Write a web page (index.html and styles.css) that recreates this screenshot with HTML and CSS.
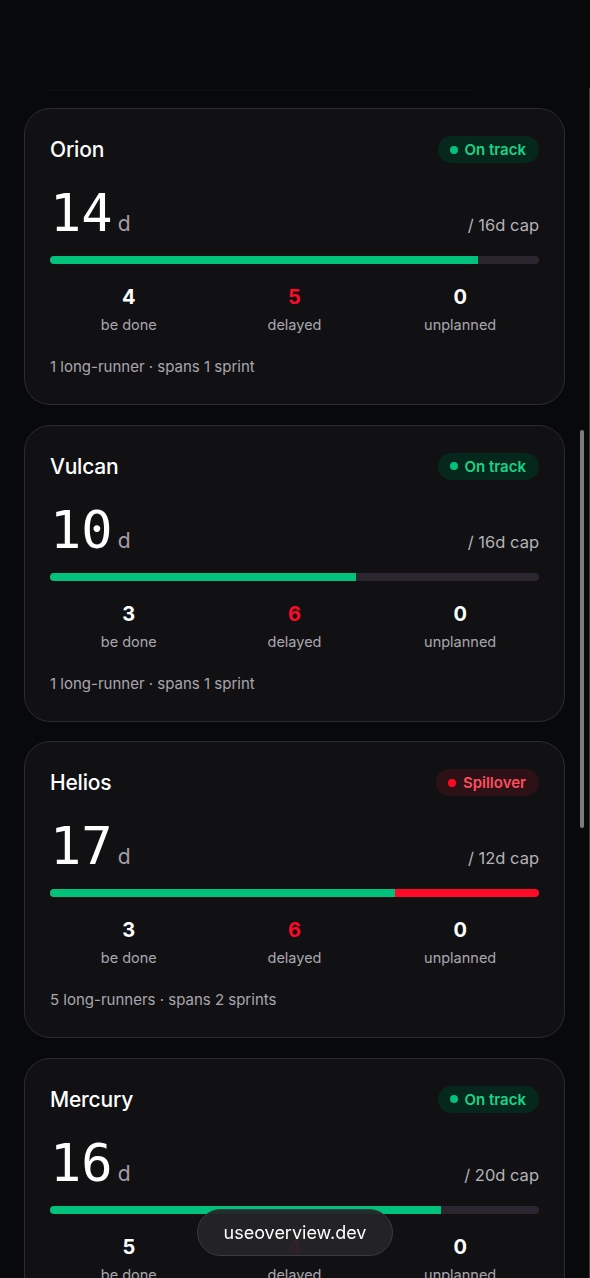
FILE: index.html
```html
<!DOCTYPE html>
<html lang="en">
<head>
    <meta charset="UTF-8">
    <meta name="viewport" content="width=device-width, initial-scale=1.0">
    <title>Sprint overview</title>
    <link rel="stylesheet" href="styles.css">
</head>
<body>
    <header class="top-bar"></header>

    <main class="team-list">
        <section class="team-card">
            <div class="card-head">
                <h2>Orion</h2>
                <span class="badge ok"><i class="dot"></i>On track</span>
            </div>
            <div class="load-row">
                <div class="load"><span class="days">14</span><span class="unit">d</span></div>
                <span class="cap">/ 16d cap</span>
            </div>
            <div class="bar"><div class="fill" style="width: 87.5%"></div></div>
            <div class="stats">
                <div class="stat"><b>4</b><span>be done</span></div>
                <div class="stat late"><b>5</b><span>delayed</span></div>
                <div class="stat"><b>0</b><span>unplanned</span></div>
            </div>
            <p class="note">1 long-runner · spans 1 sprint</p>
        </section>

        <section class="team-card">
            <div class="card-head">
                <h2>Vulcan</h2>
                <span class="badge ok"><i class="dot"></i>On track</span>
            </div>
            <div class="load-row">
                <div class="load"><span class="days">10</span><span class="unit">d</span></div>
                <span class="cap">/ 16d cap</span>
            </div>
            <div class="bar"><div class="fill" style="width: 62.5%"></div></div>
            <div class="stats">
                <div class="stat"><b>3</b><span>be done</span></div>
                <div class="stat late"><b>6</b><span>delayed</span></div>
                <div class="stat"><b>0</b><span>unplanned</span></div>
            </div>
            <p class="note">1 long-runner · spans 1 sprint</p>
        </section>

        <section class="team-card">
            <div class="card-head">
                <h2>Helios</h2>
                <span class="badge spill"><i class="dot"></i>Spillover</span>
            </div>
            <div class="load-row">
                <div class="load"><span class="days">17</span><span class="unit">d</span></div>
                <span class="cap">/ 12d cap</span>
            </div>
            <div class="bar over"><div class="fill" style="width: 70.6%"></div></div>
            <div class="stats">
                <div class="stat"><b>3</b><span>be done</span></div>
                <div class="stat late"><b>6</b><span>delayed</span></div>
                <div class="stat"><b>0</b><span>unplanned</span></div>
            </div>
            <p class="note">5 long-runners · spans 2 sprints</p>
        </section>

        <section class="team-card">
            <div class="card-head">
                <h2>Mercury</h2>
                <span class="badge ok"><i class="dot"></i>On track</span>
            </div>
            <div class="load-row">
                <div class="load"><span class="days">16</span><span class="unit">d</span></div>
                <span class="cap">/ 20d cap</span>
            </div>
            <div class="bar"><div class="fill" style="width: 80%"></div></div>
            <div class="stats">
                <div class="stat"><b>5</b><span>be done</span></div>
                <div class="stat late"><b>4</b><span>delayed</span></div>
                <div class="stat"><b>0</b><span>unplanned</span></div>
            </div>
            <p class="note">2 long-runners · spans 1 sprint</p>
        </section>
    </main>

    <div class="url-pill">useoverview.dev</div>
    <div class="scroll-thumb"></div>
    <div class="edge"></div>
</body>
</html>
```

FILE: styles.css
```css
* {
    margin: 0;
    padding: 0;
    box-sizing: border-box;
}

html {
    scrollbar-width: none;
}

html::-webkit-scrollbar {
    display: none;
}

/* Page */
body {
    font-family: 'Inter', 'Noto Sans', sans-serif;
    background: #08090b;
    color: #fff;
}

.top-bar {
    height: 91px;
    width: 427px;
    margin-left: 48px;
    border-bottom: 1px solid #0f1013;
}

.team-list {
    display: flex;
    flex-direction: column;
    gap: 19.5px;
    padding: 17px 25px 40px 24px;
}

/* Card */
.team-card {
    background: #111114;
    border: 1px solid #2b2b30;
    border-radius: 26px;
    padding: 27px 25px 27px 25px;
}

.card-head {
    display: flex;
    justify-content: space-between;
    align-items: center;
    height: 27px;
}

.card-head h2 {
    font-size: 21px;
    font-weight: 450;
    letter-spacing: -0.2px;
}

.badge {
    display: flex;
    align-items: center;
    gap: 7px;
    height: 27px;
    padding: 0 13px 0 12px;
    border-radius: 14px;
    font-size: 15px;
    font-weight: 600;
}

.badge .dot {
    width: 8px;
    height: 8px;
    border-radius: 50%;
    background: currentColor;
}

.badge.ok {
    background: #06281c;
    color: #19d487;
}

.badge.ok .dot {
    background: #00c27a;
}

.badge.spill {
    background: #2c1217;
    color: #ff4d5e;
}

.badge.spill .dot {
    background: #ff0a26;
}

.load-row {
    display: flex;
    justify-content: space-between;
    align-items: baseline;
    margin-top: 24px;
}

.load {
    display: flex;
    align-items: baseline;
}

.days {
    font-family: 'DejaVu Sans Mono', monospace;
    font-size: 52px;
    line-height: 52px;
}

.unit {
    font-size: 21px;
    color: #a59fa7;
    margin-left: 5px;
}

.cap {
    font-size: 16.5px;
    color: #b5b3b8;
}

.bar {
    margin-top: 17px;
    height: 8px;
    border-radius: 4px;
    background: #2b2530;
    overflow: hidden;
}

.bar .fill {
    height: 100%;
    background: #00c27a;
}

.bar.over {
    background: #ff0a26;
}

.stats {
    display: grid;
    grid-template-columns: repeat(3, 1fr);
    margin: 21px -4px 0;
    text-align: center;
}

.stat b {
    display: block;
    font-size: 20px;
    line-height: 24px;
    font-weight: 650;
}

.stat span {
    display: block;
    margin-top: 6px;
    font-size: 14.5px;
    line-height: 20px;
    color: #a9a7ad;
}

.stat.late b {
    color: #ff0a26;
}

.note {
    margin-top: 22px;
    font-size: 15px;
    line-height: 20px;
    color: #a9a7ad;
}

/* Overlays */
.url-pill {
    position: fixed;
    left: 197px;
    bottom: 22px;
    width: 196px;
    height: 47px;
    border-radius: 24px;
    background: rgba(36, 36, 39, 0.94);
    border: 1px solid #3b3b40;
    display: flex;
    align-items: center;
    justify-content: center;
    font-size: 18px;
    color: #fff;
}

.scroll-thumb {
    position: fixed;
    top: 430px;
    right: 6px;
    width: 4px;
    height: 398px;
    border-radius: 2px;
    background: #7c7c7f;
}

.edge {
    position: fixed;
    top: 88px;
    right: 0;
    width: 1px;
    bottom: 0;
    background: #3c3c40;
}
```
